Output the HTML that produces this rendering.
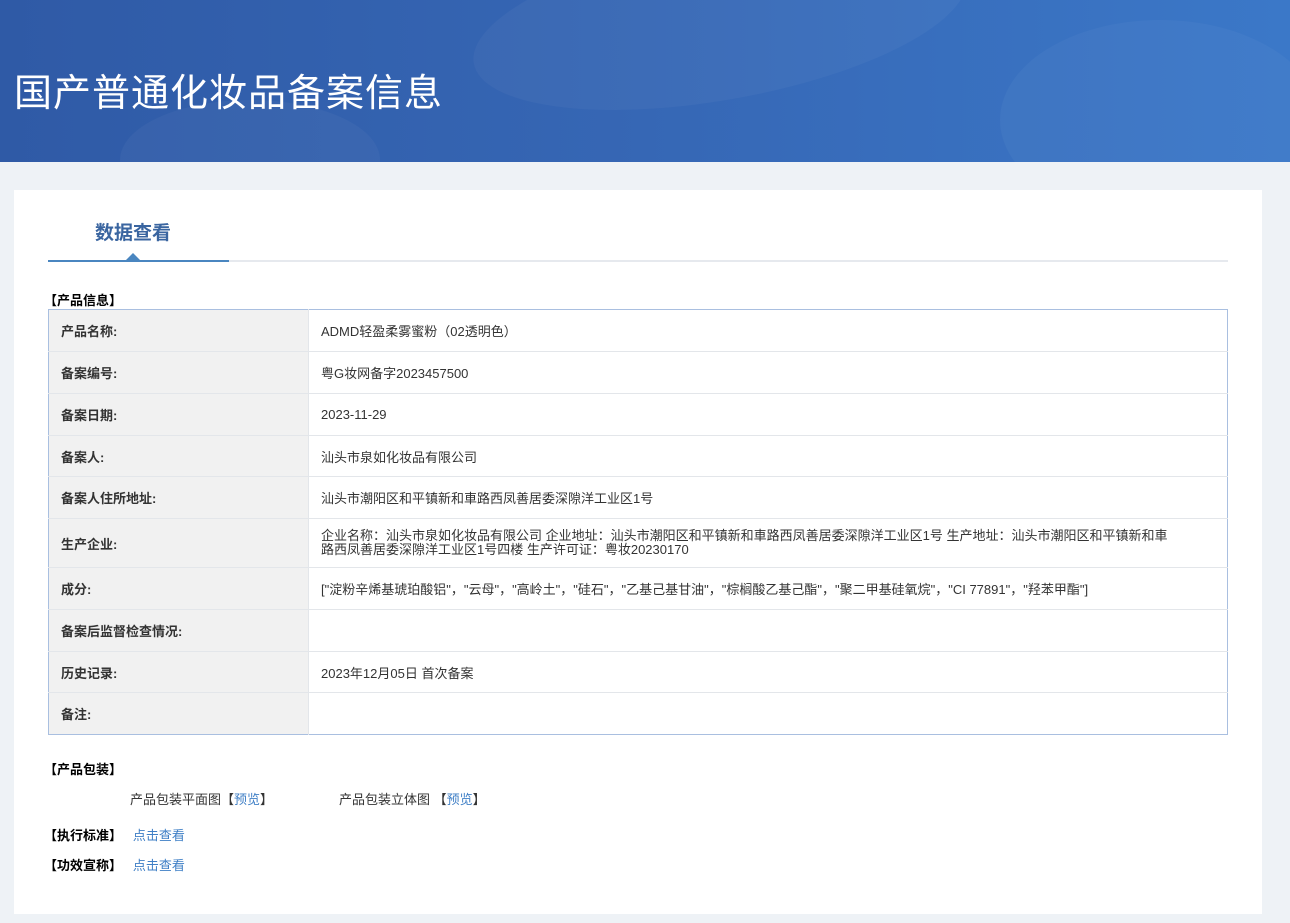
<!DOCTYPE html><html><head><meta charset="utf-8"><style>
*{margin:0;padding:0;box-sizing:border-box}
body{width:1290px;height:923px;background:#eef2f6;font-family:"Liberation Sans","Noto Sans CJK SC",sans-serif;font-size:13px;color:#333;position:relative;overflow:hidden}
.hd{position:absolute;left:0;top:0;width:1290px;height:162px;background:linear-gradient(90deg,#2f5aa6 0%,#3667b5 50%,#3b78c8 100%);overflow:hidden}
.hd h1{position:absolute;left:14px;top:62px;font-size:38px;font-weight:normal;color:#fff;letter-spacing:1px;font-family:"Liberation Sans","Noto Sans CJK SC",sans-serif}
.blob{position:absolute;border-radius:50%;background:rgba(255,255,255,.035)}
.card{position:absolute;left:14px;top:190px;width:1248px;height:724px;background:#fff}
.tab{position:absolute;left:81px;top:28px;font-size:19px;font-weight:bold;color:#3a65a0}
.line{position:absolute;left:34px;top:70px;width:1180px;height:2px;background:#e6e9ee}
.line2{position:absolute;left:34px;top:70px;width:181px;height:2px;background:#4a86c0}
.tri{position:absolute;left:112px;top:63px;border:7px solid transparent;border-bottom:7px solid #4a86c0;border-top:0}
.sec{position:absolute;font-weight:bold;color:#000;font-size:13px}
table{position:absolute;left:34px;top:119px;width:1180px;border-collapse:collapse;border:1px solid #a9bfe0}
td{border-bottom:1px solid #e3e6ea;padding:0 12px;font-size:13px;vertical-align:middle}
td.l{width:260px;background:#f1f1f1;font-weight:bold;color:#333;border-right:1px solid #e3e6ea}
a{color:#3f7fc6;text-decoration:none}
</style></head><body>
<div class="hd">
<div class="blob" style="left:470px;top:-60px;width:500px;height:160px;transform:rotate(-10deg)"></div>
<div class="blob" style="left:1000px;top:20px;width:320px;height:200px"></div>
<div class="blob" style="left:120px;top:100px;width:260px;height:120px"></div>
<h1>国产普通化妆品备案信息</h1></div>
<div class="card">
<div class="tab">数据查看</div>
<div class="line"></div><div class="line2"></div><div class="tri"></div>
<div class="sec" style="left:30px;top:100px">【产品信息】</div>
<table>
<tr style="height:42px"><td class="l">产品名称:</td><td>ADMD轻盈柔雾蜜粉（02透明色）</td></tr>
<tr style="height:42px"><td class="l">备案编号:</td><td>粤G妆网备字2023457500</td></tr>
<tr style="height:42px"><td class="l">备案日期:</td><td>2023-11-29</td></tr>
<tr style="height:41px"><td class="l">备案人:</td><td>汕头市泉如化妆品有限公司</td></tr>
<tr style="height:42px"><td class="l">备案人住所地址:</td><td>汕头市潮阳区和平镇新和車路西凤善居委深隙洋工业区1号</td></tr>
<tr style="height:49px"><td class="l">生产企业:</td><td style="line-height:14px;padding-right:50px">企业名称：汕头市泉如化妆品有限公司 企业地址：汕头市潮阳区和平镇新和車路西凤善居委深隙洋工业区1号 生产地址：汕头市潮阳区和平镇新和車路西凤善居委深隙洋工业区1号四楼 生产许可证：粤妆20230170</td></tr>
<tr style="height:42px"><td class="l">成分:</td><td>["淀粉辛烯基琥珀酸铝"，"云母"，"高岭土"，"硅石"，"乙基己基甘油"，"棕榈酸乙基己酯"，"聚二甲基硅氧烷"，"CI 77891"，"羟苯甲酯"]</td></tr>
<tr style="height:42px"><td class="l">备案后监督检查情况:</td><td></td></tr>
<tr style="height:41px"><td class="l">历史记录:</td><td>2023年12月05日 首次备案</td></tr>
<tr style="height:42px;"><td class="l" style="border-bottom:0">备注:</td><td style="border-bottom:0"></td></tr>
</table>
<div class="sec" style="left:30px;top:569px">【产品包装】</div>
<div style="position:absolute;left:116px;top:599px">产品包装平面图【<a>预览</a>】</div>
<div style="position:absolute;left:325px;top:599px">产品包装立体图 【<a>预览</a>】</div>
<div style="position:absolute;left:30px;top:635px"><b style="color:#000">【执行标准】</b>&nbsp;&nbsp;&nbsp;<a>点击查看</a></div>
<div style="position:absolute;left:30px;top:665px"><b style="color:#000">【功效宣称】</b>&nbsp;&nbsp;&nbsp;<a>点击查看</a></div>
</div>
</body></html>
